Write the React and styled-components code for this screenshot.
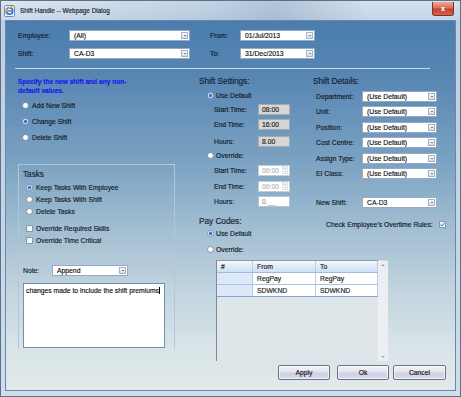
import styled, { createGlobalStyle, css } from "styled-components";

const Global = createGlobalStyle`
  html, body { margin: 0; padding: 0; }
  body {
    width: 461px;
    height: 397px;
    overflow: hidden;
    font-family: "Liberation Sans", Arial, sans-serif;
    color: #141c28;
    -webkit-text-stroke: 0.15px currentColor;
  }
`;

const Window = styled.div`
  width: 461px;
  height: 397px;
  box-sizing: border-box;
  border: 1px solid #5f7084;
  background: linear-gradient(180deg, #cfdeee 0%, #bcd0e5 5%, #c3d6e9 60%, #cfdeed 100%);
  display: flex;
  flex-direction: column;
`;

const TitleBar = styled.div`
  height: 19px;
  display: flex;
  align-items: center;
  gap: 4px;
  padding-left: 3px;
  background: linear-gradient(90deg, rgba(255,255,255,0.25), rgba(160,180,200,0.25) 45%, rgba(120,140,165,0.3) 60%, rgba(255,255,255,0.1) 80%);
`;

const TitleText = styled.span`
  font-size: 6.4px;
  color: #1b1b1b;
`;

const CloseBtn = styled.div`
  margin-left: auto;
  margin-right: 6px;
  align-self: flex-start;
  margin-top: 1px;
  width: 22px;
  height: 14px;
  box-sizing: border-box;
  border: 1px solid #7a3326;
  border-top: none;
  border-radius: 0 0 3px 3px;
  background: linear-gradient(180deg, #eba89a 0%, #d9705c 45%, #c5412a 55%, #d2634c 100%);
  display: flex;
  align-items: center;
  justify-content: center;
  color: #fff;
  font-size: 7px;
  font-weight: bold;
`;

const Client = styled.div`
  flex: 1;
  margin: 0 4px 5px 4px;
  border: 1px solid #6e86a0;
  background: linear-gradient(180deg, #4a7dad 0%, #5886b3 15%, #7ba2c2 38%, #9fbcd0 55%, #c0d3de 72%, #d8e4e8 88%, #e1e9ea 100%);
  display: flex;
  flex-direction: column;
`;

const TopForm = styled.div`
  display: grid;
  grid-template-columns: 51px 121px 20px 30px 75px;
  grid-auto-rows: 11px;
  row-gap: 6.5px;
  align-items: center;
  padding: 9px 0 0 12px;
`;

const Label = styled.span`
  font-size: 6.8px;
  color: #111a26;
  white-space: nowrap;
  width: ${p => (p.$w ? `${p.$w}px` : "auto")};
  flex-shrink: 0;
`;

const Divider = styled.div`
  margin: 9px 0 0 9px;
  width: 415px;
  height: 1px;
  background: #c6d6e4;
`;

const Main = styled.div`
  display: flex;
  padding: 0 9px 0 12px;
`;

const LeftCol = styled.div`
  width: 157px;
  flex-shrink: 0;
  display: flex;
  flex-direction: column;
`;

const Hint = styled.div`
  margin-top: 8.5px;
  font-size: 6.6px;
  line-height: 9px;
  font-weight: bold;
  color: #1818ee;
`;

const Stack = styled.div`
  display: flex;
  flex-direction: column;
  gap: ${p => p.$gap || 0}px;
  margin-top: ${p => p.$mt || 0}px;
  padding-left: ${p => p.$pl || 0}px;
`;

const OptionRow = styled.div`
  display: flex;
  align-items: center;
  gap: ${p => p.$gap ?? 3}px;
  height: 10px;
  margin-top: ${p => p.$mt || 0}px;
  padding-left: ${p => p.$pl || 0}px;
  font-size: 6.8px;
  color: #111a26;
  white-space: nowrap;
`;

const Radio = styled.span`
  width: 7px;
  height: 7px;
  flex-shrink: 0;
  box-sizing: border-box;
  border-radius: 50%;
  border: 1px solid #8b9aa8;
  background: radial-gradient(circle at 40% 35%, #ffffff 40%, #dfe5ea 100%);
  display: flex;
  align-items: center;
  justify-content: center;
  ${p =>
    p.$on &&
    css`
      &::after {
        content: "";
        width: 3px;
        height: 3px;
        border-radius: 50%;
        background: #2b6fd4;
        box-shadow: 0 0 1px 0.5px #7fb0ee;
      }
    `}
`;

const Check = styled.span`
  width: 7px;
  height: 7px;
  flex-shrink: 0;
  box-sizing: border-box;
  border: 1px solid #8b9aa8;
  background: linear-gradient(135deg, #e4e9ee, #ffffff);
  display: flex;
  align-items: center;
  justify-content: center;
`;

const GroupBox = styled.div`
  margin-top: ${p => p.$mt || 0}px;
  height: ${p => p.$h}px;
  box-sizing: border-box;
  border: 1px solid #b3c6d6;
  ${p => p.$open && css`border-bottom: none;`}
  padding: ${p => p.$pad || "0"};
  display: flex;
  flex-direction: column;
`;

const GroupTitle = styled.div`
  font-size: 8.2px;
  line-height: 11px;
  color: #162030;
`;

const Heading = styled.div`
  font-size: 8.3px;
  line-height: 12px;
  color: #152031;
  letter-spacing: -0.05px;
  margin-top: ${p => p.$mt || 0}px;
  padding-left: ${p => p.$pl || 0}px;
`;

const NoteRow = styled.div`
  display: flex;
  align-items: center;
  height: 12px;
`;

const NoteArea = styled.div`
  margin-top: 6px;
  width: 142px;
  height: 65px;
  box-sizing: border-box;
  border: 1px solid #6f8fb8;
  background: #fff;
  padding: 3px 2px;
  font-size: 6.8px;
  color: #111;
`;

const Caret = styled.span`
  display: inline-block;
  width: 1px;
  height: 7px;
  background: #000;
  vertical-align: -1px;
`;

const RightArea = styled.div`
  margin-left: 15px;
  flex: 1;
  display: flex;
  flex-direction: column;
`;

const Columns = styled.div`
  display: flex;
`;

const MidCol = styled.div`
  width: 123px;
  flex-shrink: 0;
  display: flex;
  flex-direction: column;
  padding-top: 6.5px;
`;

const DetCol = styled.div`
  flex: 1;
  display: flex;
  flex-direction: column;
  padding-top: 6.5px;
`;

const FieldRow = styled.div`
  display: flex;
  align-items: center;
  height: 11px;
  margin-top: ${p => p.$mt || 0}px;
  padding-left: ${p => p.$pl || 0}px;
`;

const SelectBox = styled.div`
  width: ${p => p.$w}px;
  height: 11px;
  box-sizing: border-box;
  background: #fff;
  border: 1px solid #93abc6;
  display: flex;
  align-items: center;
  justify-content: space-between;
  padding: 0 1px 0 4px;
  font-size: 6.8px;
  color: #111;
  white-space: nowrap;
`;

const DropBtn = styled.span`
  width: 7px;
  height: 7px;
  box-sizing: border-box;
  border: 1px solid #a3b4c7;
  background: linear-gradient(180deg, #f6f8fb, #d4dde7);
  display: flex;
  align-items: center;
  justify-content: center;
  &::after {
    content: "";
    border-left: 1.5px solid transparent;
    border-right: 1.5px solid transparent;
    border-top: 1.5px solid #1a1a1a;
  }
`;

const TimeBox = styled.div`
  width: 32px;
  height: 11px;
  box-sizing: border-box;
  display: flex;
  align-items: center;
  justify-content: space-between;
  padding: 0 1px 0 3px;
  font-size: 6.8px;
  ${p =>
    p.$kind === "fixed" &&
    css`
      background: #d6d6d6;
      border: 1px solid #a9a9a9;
      color: #1a1a1a;
    `}
  ${p =>
    p.$kind === "spin" &&
    css`
      background: #fff;
      border: 1px solid #c4ccd4;
      color: #b4b4b4;
    `}
  ${p =>
    p.$kind === "plain" &&
    css`
      background: #fff;
      border: 1px solid #b8c4d0;
      color: #9a9a9a;
    `}
`;

const Spin = styled.span`
  width: 6px;
  height: 8px;
  box-sizing: border-box;
  border: 1px solid #dde2e7;
  background: #f1f3f5;
  display: flex;
  flex-direction: column;
  align-items: center;
  justify-content: space-around;
  &::before,
  &::after {
    content: "";
    border-left: 1px solid transparent;
    border-right: 1px solid transparent;
  }
  &::before { border-bottom: 1px solid #b8b8b8; }
  &::after { border-top: 1px solid #b8b8b8; }
`;

const GridWrap = styled.div`
  margin: 5.5px 0 0 26px;
  width: 172px;
  height: 101px;
  display: flex;
`;

const Grid = styled.div`
  width: 162px;
  box-sizing: border-box;
  border-left: 1px solid #7f8c98;
  border-top: 1px solid #8e9aa6;
  background: #dfe6ea;
  display: flex;
  flex-direction: column;
`;

const GridRow = styled.div`
  display: grid;
  grid-template-columns: 36px 63px 62px;
  height: 12px;
  box-sizing: border-box;
  border-bottom: 1px solid ${p => (p.$head ? "#9fbbe0" : "#a9c3e6")};
  background: ${p => (p.$head ? "linear-gradient(180deg, #f3f8fe 0%, #dce9f8 60%, #cfe0f4 100%)" : "#fff")};
  ${p => p.$last && css`border-bottom-color: #7ea3d6;`}
`;

const Cell = styled.div`
  display: flex;
  align-items: center;
  padding-left: 4px;
  font-size: 6.8px;
  color: #141c28;
  border-right: 1px solid #b6cce8;
  background: ${p => (p.$key ? "#dde9f8" : "transparent")};
`;

const Scroll = styled.div`
  width: 10px;
  background: #eceff1;
  border-top: 1px solid #d5dbe0;
  display: flex;
  flex-direction: column;
  justify-content: space-between;
  align-items: center;
  padding: 3px 0;
  box-sizing: border-box;
  &::before,
  &::after {
    content: "";
    border-left: 2px solid transparent;
    border-right: 2px solid transparent;
  }
  &::before { border-bottom: 2px solid #9aa2aa; }
  &::after { border-top: 2px solid #9aa2aa; }
`;

const Buttons = styled.div`
  display: flex;
  justify-content: flex-end;
  margin-top: 4px;
`;

const Button = styled.div`
  width: ${p => p.$w || 52}px;
  height: 15px;
  margin-left: ${p => p.$ml || 0}px;
  box-sizing: border-box;
  border: 1px solid #6f7386;
  border-radius: 2px;
  background: linear-gradient(180deg, #f3f3fa 0%, #e2e2ef 48%, #cfd0e2 52%, #d9d9e9 100%);
  box-shadow: inset 0 0 0 1px rgba(255, 255, 255, 0.6);
  display: flex;
  align-items: center;
  justify-content: center;
  font-size: 6.8px;
  color: #151515;
`;

function IeIcon() {
  return (
    <svg width="12" height="13" viewBox="0 0 12 13">
      <rect x="0.5" y="1.5" width="10" height="11" rx="1" fill="#e9f1fb" stroke="#6f8db3" />
      <circle cx="5.5" cy="7" r="3.2" fill="none" stroke="#2a78d6" strokeWidth="1.6" />
      <path d="M2.5 7 H8.5" stroke="#2a78d6" strokeWidth="1.2" />
      <path d="M1 9.5 C3 3, 9 1.5, 11 3" fill="none" stroke="#f1b31c" strokeWidth="1.1" />
    </svg>
  );
}

function Select({ w, value }) {
  return (
    <SelectBox $w={w}>
      <span>{value}</span>
      <DropBtn />
    </SelectBox>
  );
}

function Option({ label, on, check, mt, pl, gap }) {
  return (
    <OptionRow $mt={mt} $pl={pl} $gap={gap}>
      {check ? <Check /> : <Radio $on={on} />}
      <span>{label}</span>
    </OptionRow>
  );
}

function TimeField({ label, value, kind, mt }) {
  return (
    <FieldRow $mt={mt} $pl={24}>
      <Label $w={44}>{label}</Label>
      <TimeBox $kind={kind}>
        <span>{value}</span>
        {kind === "spin" && <Spin />}
      </TimeBox>
    </FieldRow>
  );
}

const details = ["Department:", "Unit:", "Position:", "Cost Centre:", "Assign Type:", "EI Class:"];

const payCodes = [
  { from: "RegPay", to: "RegPay" },
  { from: "SDWKND", to: "SDWKND" },
];

export default function App() {
  return (
    <>
      <Global />
      <Window>
        <TitleBar>
          <IeIcon />
          <TitleText>Shift Handle -- Webpage Dialog</TitleText>
          <CloseBtn>x</CloseBtn>
        </TitleBar>
        <Client>
          <TopForm>
            <Label>Employee:</Label>
            <Select w={121} value="(All)" />
            <span />
            <Label>From:</Label>
            <Select w={75} value="01/Jul/2013" />
            <Label>Shift:</Label>
            <Select w={121} value="CA-D3" />
            <span />
            <Label>To:</Label>
            <Select w={75} value="31/Dec/2013" />
          </TopForm>
          <Divider />
          <Main>
            <LeftCol>
              <Hint>
                Specify the new shift and any non-
                <br />
                default values.
              </Hint>
              <Stack $mt={5} $gap={6} $pl={4}>
                <Option label="Add New Shift" />
                <Option label="Change Shift" on />
                <Option label="Delete Shift" />
              </Stack>
              <GroupBox $mt={22} $h={89} $pad="3.5px 0 0 4px">
                <GroupTitle>Tasks</GroupTitle>
                <Stack $mt={3} $gap={2} $pl={3}>
                  <Option label="Keep Tasks With Employee" on />
                  <Option label="Keep Tasks With Shift" />
                  <Option label="Delete Tasks" />
                </Stack>
                <Stack $mt={7} $gap={2} $pl={3}>
                  <Option label="Override Required Skills" check />
                  <Option label="Override Time Critical" check />
                </Stack>
              </GroupBox>
              <GroupBox $mt={8} $h={88} $pad="2.5px 0 0 4px" $open>
                <NoteRow>
                  <Label $w={29}>Note:</Label>
                  <Select w={76} value="Append" />
                </NoteRow>
                <NoteArea>
                  changes made to include the shift premiums
                  <Caret />
                </NoteArea>
              </GroupBox>
            </LeftCol>
            <RightArea>
              <Columns>
                <MidCol>
                  <Heading $pl={9}>Shift Settings:</Heading>
                  <Option label="Use Default" on mt={3} pl={17} gap={2} />
                  <TimeField label="Start Time:" value="08:00" kind="fixed" mt={3.5} />
                  <TimeField label="End Time:" value="16:00" kind="fixed" mt={4} />
                  <TimeField label="Hours:" value="8.00" kind="fixed" mt={6} />
                  <Option label="Override:" mt={3.5} pl={17} gap={2} />
                  <TimeField label="Start Time:" value="00:00" kind="spin" mt={4.5} />
                  <TimeField label="End Time:" value="00:00" kind="spin" mt={5} />
                  <TimeField label="Hours:" value="0.__" kind="plain" mt={4} />
                  <Heading $pl={9} $mt={8.5}>Pay Codes:</Heading>
                  <Option label="Use Default" on mt={1.5} pl={17} gap={2} />
                  <Option label="Override:" mt={6} pl={17} gap={2} />
                </MidCol>
                <DetCol>
                  <Heading>Shift Details:</Heading>
                  <Stack $mt={3.5} $gap={4.6}>
                    {details.map(d => (
                      <FieldRow key={d} $pl={3}>
                        <Label $w={46}>{d}</Label>
                        <Select w={75} value="(Use Default)" />
                      </FieldRow>
                    ))}
                  </Stack>
                  <FieldRow $mt={18} $pl={3}>
                    <Label $w={46}>New Shift:</Label>
                    <Select w={75} value="CA-D3" />
                  </FieldRow>
                  <OptionRow $mt={11.5} $pl={13} $gap={6}>
                    <span>Check Employee's Overtime Rules:</span>
                    <Check>
                      <svg width="5" height="5" viewBox="0 0 5 5">
                        <path d="M0.6 2.6 L2 4 L4.5 0.8" fill="none" stroke="#2f64b8" strokeWidth="1" />
                      </svg>
                    </Check>
                  </OptionRow>
                </DetCol>
              </Columns>
              <GridWrap>
                <Grid>
                  <GridRow $head>
                    <Cell>#</Cell>
                    <Cell>From</Cell>
                    <Cell>To</Cell>
                  </GridRow>
                  {payCodes.map((r, i) => (
                    <GridRow key={r.from} $last={i === payCodes.length - 1}>
                      <Cell $key />
                      <Cell>{r.from}</Cell>
                      <Cell>{r.to}</Cell>
                    </GridRow>
                  ))}
                </Grid>
                <Scroll />
              </GridWrap>
              <Buttons>
                <Button>Apply</Button>
                <Button $ml={7}>Ok</Button>
                <Button $ml={4} $w={53}>Cancel</Button>
              </Buttons>
            </RightArea>
          </Main>
        </Client>
      </Window>
    </>
  );
}
